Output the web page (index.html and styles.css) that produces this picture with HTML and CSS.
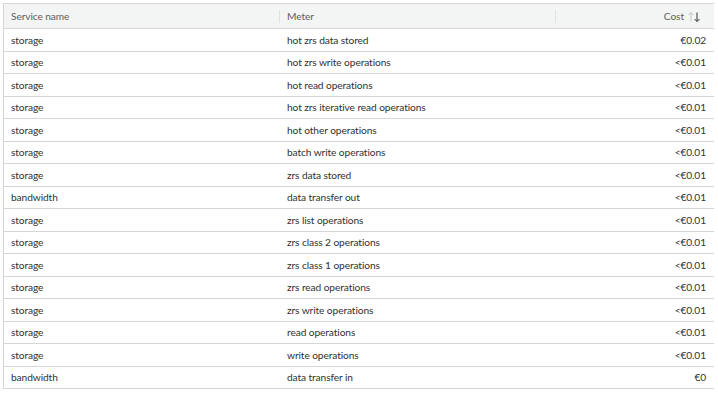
FILE: index.html
```html
<!doctype html>
<html lang="en">
  <head>
    <meta charset="UTF-8" />
    <meta name="viewport" content="width=device-width, initial-scale=1.0" />
    <title>Cost by meter</title>
    <link rel="stylesheet" href="styles.css">
  </head>
  <body>
    <table class="grid">
      <thead>
        <tr>
          <th class="col-service"><span class="head">Service name</span></th>
          <th class="col-meter"><span class="head">Meter</span></th>
          <th class="col-cost">
            <span class="head head-cost">Cost
              <svg class="sort" width="14" height="12" viewBox="0 0 14 12">
                <path d="M4 10.5V1.5M1.5 4L4 1.5L6.5 4" stroke="#c8c6c4" fill="none" stroke-width="1"/>
                <path d="M10 1.5V10.5M7.5 8L10 10.5L12.5 8" stroke="#323130" fill="none" stroke-width="1"/>
              </svg>
            </span>
          </th>
        </tr>
      </thead>
      <tbody>
        <tr><td>storage</td><td>hot zrs data stored</td><td class="num">€0.02</td></tr>
        <tr><td>storage</td><td>hot zrs write operations</td><td class="num">&lt;€0.01</td></tr>
        <tr><td>storage</td><td>hot read operations</td><td class="num">&lt;€0.01</td></tr>
        <tr><td>storage</td><td>hot zrs iterative read operations</td><td class="num">&lt;€0.01</td></tr>
        <tr><td>storage</td><td>hot other operations</td><td class="num">&lt;€0.01</td></tr>
        <tr><td>storage</td><td>batch write operations</td><td class="num">&lt;€0.01</td></tr>
        <tr><td>storage</td><td>zrs data stored</td><td class="num">&lt;€0.01</td></tr>
        <tr><td>bandwidth</td><td>data transfer out</td><td class="num">&lt;€0.01</td></tr>
        <tr><td>storage</td><td>zrs list operations</td><td class="num">&lt;€0.01</td></tr>
        <tr><td>storage</td><td>zrs class 2 operations</td><td class="num">&lt;€0.01</td></tr>
        <tr><td>storage</td><td>zrs class 1 operations</td><td class="num">&lt;€0.01</td></tr>
        <tr><td>storage</td><td>zrs read operations</td><td class="num">&lt;€0.01</td></tr>
        <tr><td>storage</td><td>zrs write operations</td><td class="num">&lt;€0.01</td></tr>
        <tr><td>storage</td><td>read operations</td><td class="num">&lt;€0.01</td></tr>
        <tr><td>storage</td><td>write operations</td><td class="num">&lt;€0.01</td></tr>
        <tr><td>bandwidth</td><td>data transfer in</td><td class="num">€0</td></tr>
      </tbody>
    </table>
  </body>
</html>
```

FILE: styles.css
```css
body {
  margin: 3px 4px 0 3px;
  background: #fff;
  font-family: Lato, "Noto Sans", Arial, sans-serif;
  font-size: 10.2px;
  letter-spacing: -0.1px;
  color: #323130;
}
.grid {
  width: 712px;
  border-collapse: collapse;
  border: 1px solid #d6d6d6;
  table-layout: fixed;
}
.col-service,
.col-meter {
  width: 276px;
}
th {
  background: #f3f4f4;
  height: 23px;
  padding: 1px 0 0;
  font-weight: normal;
  text-align: left;
  color: #605e5c;
  border-bottom: 1px solid #d6d6d6;
}
.head {
  display: block;
  padding: 0 7px;
  line-height: 13px;
  border-right: 1px solid #e1e1e1;
}
.col-cost .head {
  border-right: none;
}
.head-cost {
  display: flex;
  justify-content: flex-end;
  align-items: center;
  gap: 3px;
  padding-right: 13px;
}
.sort {
  display: block;
}
td {
  height: 20.5px;
  padding: 1px 7px 0;
  line-height: 13px;
  border-bottom: 1px solid #d6d6d6;
  white-space: nowrap;
}
td.num {
  text-align: right;
  padding-right: 8px;
}
```
